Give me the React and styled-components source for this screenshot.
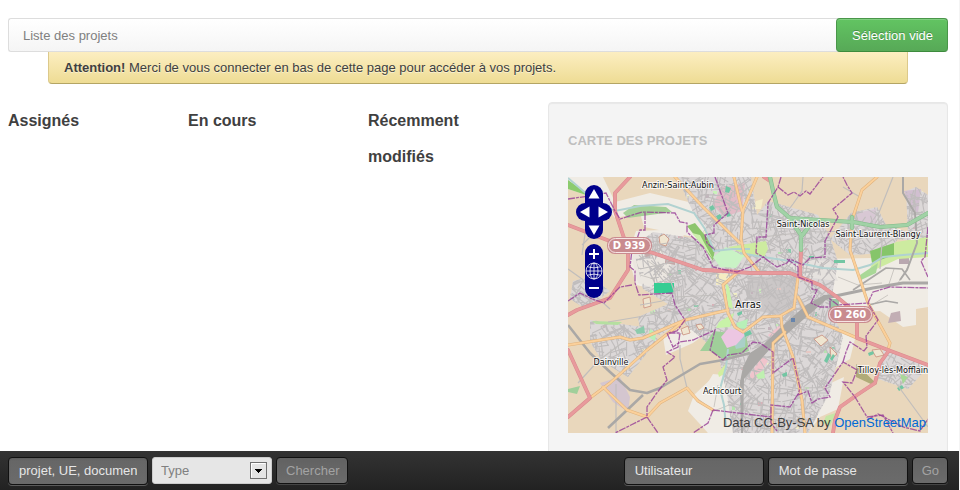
import React from "react";
import styled, { createGlobalStyle } from "styled-components";

const GlobalStyle = createGlobalStyle`
  *, *::before, *::after { box-sizing: border-box; }
  body {
    margin: 0;
    background: #fff;
    color: #404040;
    font: 13px/18px "Liberation Sans", Arial, sans-serif;
  }
  button, input, select { font: inherit; }
  h2, h3, p { margin: 0; }
`;

const Page = styled.div`
  display: flex;
  flex-direction: column;
  height: 100vh;
  border-right: 1px solid #f4f4f4;
`;

const Content = styled.main`
  flex: 1;
  min-height: 0;
  overflow-y: auto;
  scrollbar-width: none;
  padding: 18px 11px 0 8px;
`;

const Breadcrumb = styled.nav`
  display: flex;
  align-items: center;
  justify-content: space-between;
  height: 34px;
  padding-left: 14px;
  border: 1px solid #ddd;
  border-right: 0;
  border-radius: 3px;
  background: linear-gradient(#fff, #f5f5f5);
  color: #808080;
`;

const BreadcrumbLabel = styled.span`
  padding-top: 2px;
`;

const SelectionButton = styled.button`
  height: 34px;
  padding: 2px 14px 0 15px;
  border: 1px solid #4a964a;
  border-bottom-color: #3d8b3d;
  border-radius: 4px;
  background: linear-gradient(#62c462, #57a957);
  box-shadow: inset 0 1px 0 rgba(255, 255, 255, 0.2);
  color: #fff;
  text-shadow: 0 -1px 0 rgba(0, 0, 0, 0.25);
`;

const Alert = styled.p`
  margin: 0 40px 18px;
  padding: 7px 15px 6px;
  border: 1px solid #dcc98b;
  border-top: 0;
  border-bottom-color: #b4a564;
  border-radius: 0 0 4px 4px;
  background: linear-gradient(#fceec1, #eedc94);
  text-shadow: 0 1px 0 rgba(255, 255, 255, 0.5);
`;

const Columns = styled.div`
  display: grid;
  grid-template-columns: repeat(3, minmax(0, 8fr)) minmax(0, 20fr);
  gap: 20px;
`;

const ColumnTitle = styled.h2`
  padding-top: 1px;
  font-size: 16px;
  line-height: 36px;
`;

const Well = styled.section`
  padding: 20px 19px 56px;
  border: 1px solid #e7e7e7;
  border-radius: 4px;
  background: #f4f4f4;
  box-shadow: inset 0 1px 1px rgba(0, 0, 0, 0.05);
`;

const WellTitle = styled.h3`
  margin-bottom: 18px;
  color: #bfbfbf;
  font-size: 13px;
  line-height: 36px;
  text-transform: uppercase;
`;

const MapFrame = styled.div`
  position: relative;
  height: 256px;
  overflow: hidden;
`;

const MapDrawing = styled.svg`
  display: block;
  width: 100%;
  height: 100%;
`;

const MapControls = styled.div`
  position: absolute;
  top: 8px;
  left: 8px;
  display: grid;
  gap: 5px;
  justify-items: center;
`;

const PanPad = styled.div`
  display: grid;
  grid-template-columns: 18px 18px;
  grid-auto-rows: 18px;
  justify-items: center;
`;

const ZoomPad = styled.div`
  display: grid;
  grid-auto-rows: 18px;
`;

const radii = {
  up: "9px 9px 0 0",
  down: "0 0 9px 9px",
  left: "9px 0 0 9px",
  right: "0 9px 9px 0",
  middle: "0",
};

const MapButton = styled.button`
  width: 18px;
  height: 18px;
  padding: 0;
  border: 0;
  border-radius: ${(p) => radii[p.$shape]};
  background: #00008b;
  grid-column: ${(p) => (p.$wide ? "1 / -1" : "auto")};
`;

const MapIcon = styled.svg`
  display: block;
  width: 18px;
  height: 18px;
  fill: #fff;
`;

const Attribution = styled.div`
  position: absolute;
  right: 2px;
  bottom: 1px;
  font-size: 13px;
`;

const MapLink = styled.a`
  color: #0069d6;
  text-decoration: none;
`;

const Footer = styled.footer`
  display: flex;
  align-items: center;
  justify-content: space-between;
  height: 39px;
  padding: 0 11px 0 8px;
  background: linear-gradient(#333, #222);
`;

const Form = styled.form`
  display: flex;
  align-items: center;
  gap: 4px;
`;

const Field = styled.input`
  width: 140px;
  height: 28px;
  padding: 0 10px;
  border: 1px solid #111;
  border-radius: 4px;
  background: linear-gradient(#666, #6b6b6b);
  box-shadow: inset 0 1px 2px rgba(0, 0, 0, 0.1), 0 1px 0 rgba(255, 255, 255, 0.25);
  color: #e6e6e6;
  &::placeholder { color: #e6e6e6; opacity: 1; }
`;

const SelectBox = styled.div`
  position: relative;
  width: 120px;
`;

const Select = styled.select`
  display: block;
  width: 100%;
  height: 27px;
  padding: 0 8px;
  appearance: none;
  border: 1px solid #ccc;
  border-radius: 3px;
  background: #e6e6e6;
  color: #808080;
`;

const SelectArrow = styled.svg`
  position: absolute;
  top: 5px;
  right: 5px;
  width: 17px;
  height: 17px;
  pointer-events: none;
`;

const FooterButton = styled.button`
  height: 27px;
  padding: 0 8px 0 9px;
  border: 1px solid #111;
  border-radius: 4px;
  background: linear-gradient(#626262, #6b6b6b);
  box-shadow: 0 1px 0 rgba(255, 255, 255, 0.15);
  color: #a3a3a3;
`;

const URBAN = [
  "110,0 183,0 189,38 200,24 250,38 262,60 270,85 262,130 275,160 262,215 240,256 165,256 157,210 150,175 120,150 105,130 75,112 65,70 85,55 130,62 138,50 125,35 118,20",
  "283,36 309,30 318,48 340,55 338,14 348,10 360,18 360,66 330,62 318,76 282,78 262,62",
  "22,143 75,150 90,162 60,200 35,185 22,165",
  "70,140 105,125 118,142 92,158 72,152",
  "315,173 340,180 360,190 340,212 310,202",
  "5,104 22,100 42,114 18,132 2,122",
];

const CREAM = [
  "0,0 35,0 47,25 82,16 125,26 142,52 150,74 125,60 76,50 72,36 47,41 30,22 0,12",
  "68,54 118,52 102,96 96,114 68,108 60,78",
  "195,83 360,80 360,130 348,132 348,148 335,150 312,134 282,136 236,102",
  "124,232 145,197 176,200 174,256 140,256 138,246",
  "95,160 135,142 146,151 125,166 98,178",
  "249,155 270,150 287,162 282,182 262,194 240,206 250,180",
  "250,212 276,200 270,232 252,240 240,256 238,230",
];

const GREENS = [
  ["#8bcb6e", "0,3 27,22 32,36 18,18 0,12"],
  ["#a5cf97", "55,36 66,28 98,30 104,35 60,41"],
  ["#8dc56c", "119,49 127,46 140,62 147,72 145,84 136,70"],
  ["#cff1ae", "124,56 132,58 145,82 136,70"],
  ["#c9f3c5", "145,80 158,70 176,79 168,91 152,90"],
  ["#cdeba0", "160,70 198,64 200,72 196,80 174,76"],
  ["#cdeba0", "305,85 328,65 360,60 360,80 330,82 300,96"],
  ["#86c56a", "302,74 326,66 326,78 304,86"],
  ["#a9d897", "292,98 310,86 308,96 293,103"],
  ["#a0cf9a", "132,174 146,154 178,158 181,174 155,182 142,174"],
  ["#c8f3a8", "157,104 161,110 165,132 160,130"],
  ["#aad0c8", "166,166 178,156 177,170 168,172"],
  ["#b0ab78", "288,187 309,207 305,208 288,200"],
  ["#a0cf9a", "0,212 12,209 9,217 0,215"],
  ["#b5dfa0", "24,144 54,145 50,148 28,147"],
  ["#c8f3a8", "151,145 166,136 162,150 148,151"],
  ["#8ccbac", "67,153 76,149 77,156 69,157"],
  ["#9cc7a5", "261,122 271,122 271,131 262,131"],
  ["#bff0b0", "188,198 196,193 197,201 190,202"],
  ["#d3eea0", "150,196 160,184 156,197 151,200"],
  ["#c5e6a5", "258,239 268,236 262,249 255,246"],
  ["#a8d898", "332,197 340,200 335,207"],
  ["#b8f0b8", "168,146 180,142 178,152 170,151"],
  ["#b8f0b8", "82,152 88,156 87,164 80,160"],
];

const ACCENTS = [
  ["#e2bcc7", "153,10 177,6 174,34 156,40 145,28"],
  ["#f0c4cc", "184,194 196,178 200,184 188,202 180,202"],
  ["#f0c4cc", "200,158 212,148 212,154 204,162"],
  ["#d4c6cf", "32,206 52,200 62,220 60,235 45,225"],
  ["#f5ecc2", "148,96 163,97 157,107 148,108"],
  ["#d1bfd0", "336,14 353,12 350,36 342,32"],
  ["#d8c8d4", "288,36 308,32 308,46 286,46"],
  ["#f3ecc9", "188,24 195,22 193,32 184,32"],
  ["#c2aeb4", "323,136 332,134 333,144 320,146"],
  ["#c3a9a8", "97,79 107,81 107,88 97,86"],
  ["#b9a8b0", "331,80 341,80 341,87 331,87"],
  ["#c3a9a8", "76,75 83,76 82,81 77,80"],
];

const WATER = [
  "0,1 28,25 47,34 72,29 100,27 126,36 137,52 146,74 165,72 182,72",
  "172,76 195,80 222,84 255,91 285,93 302,88 315,80 335,78 360,76",
  "160,172 158,190 152,212 156,228 158,250",
];

const TRACKS = [
  "0,92 14,102 22,114 42,132", "14,68 22,60 40,62", "18,50 14,78", "72,128 94,124 110,112", "40,145 94,136 118,127",
  "112,168 112,182 119,211", "48,207 48,256", "10,206 30,184 62,160", "235,0 234,14 225,27 212,44",
  "325,0 310,38 314,66 312,92", "275,10 292,20 286,40", "325,202 344,228 360,250", "200,50 250,55 282,54",
  "70,70 100,66 130,72", "72,92 110,84 140,104", "100,96 108,120 150,118", "190,44 194,60 230,56",
];

const RAILS = [
  [2.6, "0,148 22,176 42,195 62,213 79,216 92,211 132,187 155,183 182,176"],
  [2.6, "40,251 75,218"],
  [2, "335,0 335,16 347,36 349,66 339,93 332,103"],
  [1.6, "285,113 318,91 334,92 342,103"],
  [3, "258,121 272,118 305,111 335,106 360,106"],
  [1.6, "300,128 318,124 330,126"],
];

const ORANGE = [
  "107,0 135,30 172,66", "189,0 175,33 173,62 176,76 192,96", "166,0 174,34", "170,95 155,108 160,136 167,150 175,155 195,140 212,139 226,131 230,100",
  "230,120 240,140 289,161", "213,139 214,150 225,180 234,223 237,256", "217,155 205,166 204,256",
  "160,133 117,143 75,161 62,163 52,160 0,168", "117,143 79,173 42,206 22,221", "35,210 59,233 79,240 92,226 119,211 130,224 145,233",
  "309,0 294,13 284,43 282,73 300,126 322,166 320,173",
];

const RED = [
  "0,48 39,63 85,76 135,93 158,94 182,96 222,96 232,100 252,108 269,120 281,130 289,145 289,161 320,173 360,188",
  "62,0 47,16 47,34 60,73 60,93 42,121 9,133 0,138", "0,173 22,221 0,240", "233,73 232,100",
  "320,175 312,186 307,206 289,218 272,230 267,243 265,256", "202,4 196,0",
];

const TRUNK = [
  "202,0 206,18 209,30 222,41 252,43 285,45 312,50 339,48 360,36",
  "233,73 233,58 222,42", "233,60 245,44", "284,51 284,40",
];

const BORDERS = [
  "0,22 28,18 38,16 47,34 52,42 74,35 107,36 112,45 119,46 119,55 135,70 145,90 158,93 169,95 182,90 195,80 209,90 219,86 222,82 235,88 242,81 257,80 257,64 270,40 265,32 284,16 279,8 275,0",
  "147,0 160,36 146,48 146,56 137,58 139,66 147,73", "213,0 210,10 200,26 198,60 189,60 188,76 197,81",
  "210,10 220,18 226,15 232,19 238,14 242,17 255,0", "219,82 230,90 230,100 244,105 244,112 249,113 243,126 252,130 262,130 262,122 270,128 300,126 305,115 322,110 360,111",
  "360,50 357,80 353,84 360,100", "77,36 77,53 72,53 69,62 65,64 62,90 67,94 67,106 71,118 104,116 107,128 117,143 109,154 100,156 112,156 110,170 99,175 107,180 95,190 99,203 88,217 79,230 79,240 47,256",
  "79,240 90,256", "64,108 52,110 36,126 24,122", "0,124 12,116 24,122", "99,156 105,170 112,165 125,163 147,153 142,173 155,183 160,178 174,176 185,165 192,166 205,175 205,196 225,181 232,211 230,218 240,214 244,226 250,222 262,220 257,211 275,185 289,193 284,206 275,205 287,220 299,240 315,238 325,256",
  "230,217 222,230 203,228 203,246 209,254", "275,185 278,175 282,165 296,174 299,170 298,159 310,143 300,126", "145,233 140,246 125,256", "145,233 203,240", "299,243 310,237 335,250 352,254 360,242",
];

const LABELS = [
  [110, 11, "Anzin-Saint-Aubin", 9],
  [235, 50, "Saint-Nicolas", 9],
  [310, 60, "Saint-Laurent-Blangy", 9],
  [180, 131, "Arras", 11],
  [43, 188, "Dainville", 9],
  [154, 217, "Achicourt", 9],
  [325, 196, "Tilloy-lès-Mofflain", 9],
];

/* Residential streets: small jittered grids, deterministic from one seed. */
function buildStreets() {
  let seed = 41;
  const random = () => {
    seed = (seed * 16807) % 2147483647;
    return seed / 2147483647;
  };
  let path = "";
  for (let y = 0; y < 260; y += 14) {
    for (let x = 0; x < 364; x += 15) {
      const angle = random() * Math.PI;
      for (let n = 0; n < 8; n += 1) {
        const a = angle + (n % 2 ? Math.PI / 2 : 0) + (random() - 0.5) / 2;
        const cx = x + random() * 15;
        const cy = y + random() * 14;
        const half = 3 + random() * 7;
        const dx = Math.cos(a) * half;
        const dy = Math.sin(a) * half;
        path += `M${(cx - dx).toFixed(1)} ${(cy - dy).toFixed(1)}L${(cx + dx).toFixed(1)} ${(cy + dy).toFixed(1)}`;
      }
    }
  }
  return path;
}

function buildBlocks() {
  const colors = ["#c8f3b8", "#8ccbac", "#f2efc6", "#e7c8c4", "#d9b1b8", "#c2b4bb", "#b5e3b0"];
  return Array.from({ length: 110 }, (_, i) => ({
    x: (i * 73 + 19) % 356,
    y: (i * 47 + (i % 7) * 11) % 252,
    w: 2 + (i % 4),
    h: 2 + (i % 3),
    fill: colors[i % colors.length],
  }));
}

const STREETS = buildStreets();
const BLOCKS = buildBlocks();

function Road({ lines, casing, color, width }) {
  return (
    <g fill="none" strokeLinejoin="round" strokeLinecap="round">
      {lines.map((points) => <polyline key={points} points={points} stroke={casing} strokeWidth={width + 1} />)}
      {lines.map((points) => <polyline key={points} points={points} stroke={color} strokeWidth={width} />)}
    </g>
  );
}

function Shield({ x, y, text }) {
  return (
    <g>
      <rect x={x} y={y} width="45" height="17" rx="8" fill="#c98b8f" />
      <rect x={x + 1.5} y={y + 1.5} width="42" height="14" rx="7" fill="#c98b8f" stroke="#f6e4e4" />
      <text x={x + 22} y={y + 12} textAnchor="middle" fill="#fff" fontFamily="DejaVu Sans, sans-serif" fontWeight="700" fontSize="10">{text}</text>
    </g>
  );
}

function CityMap() {
  return (
    <MapDrawing viewBox="0 0 360 256" preserveAspectRatio="xMidYMid slice" role="img" aria-label="Carte d'Arras">
      <defs>
        <clipPath id="urban">
          {URBAN.map((points) => <polygon key={points} points={points} />)}
        </clipPath>
      </defs>
      <rect width="360" height="256" fill="#e9d7bc" />
      {CREAM.map((points) => <polygon key={points} points={points} fill="#f0ece5" />)}
      {URBAN.map((points) => <polygon key={points} points={points} fill="#dcd8d8" />)}
      <polygon points="68,70 92,72 104,86 94,114 70,106 64,82" fill="#ebe6e0" />
      <polygon points="120,234 126,218 145,200 158,208 164,256 140,256" fill="#f0ece5" />
      <polygon points="205,80 262,84 270,104 236,100" fill="#e6e2de" />
      <polygon points="180,100 228,99 227,130 212,138 190,134 178,118" fill="#cbc7c7" />
      {ACCENTS.map(([fill, points]) => <polygon key={points} points={points} fill={fill} />)}
      <g clipPath="url(#urban)">
        {BLOCKS.map((b, i) => <rect key={i} x={b.x} y={b.y} width={b.w} height={b.h} fill={b.fill} />)}
        <path d={STREETS} fill="none" stroke="#c0bdbd" strokeWidth="1.1" />
      </g>
      <g fill="none" stroke="#c2beb9" strokeWidth="0.8">
        <path d="M75 60l8 14 16 6M80 84l20 14M72 98l14 4 8-14M88 62l10 22M130 222l16 12 20-8M150 208l-4 22M270 100l20 8 24-2M320 118l-16 10M326 92l-6 18M340 90l-10 16M256 166l16 10M268 156l-10 30M110 158l18-8" />
        <path d="M91 60l5-3 5 5-3 7-6-2zM246 162l8-4 6 5-7 6zM262 170l7 7-6 5zM75 122l7-2 1 9-7 2zM304 173l8-1 4 6-8 2zM113 152l7-3 2 7-7 2zM128 148l5-1 3 4-5 2z" fill="#efe5d0" stroke="#c98e7e" />
      </g>
      {GREENS.map(([fill, points]) => <polygon key={points} points={points} fill={fill} />)}
      <polygon points="153,160 160,152 172,153 177,158 168,168 159,171" fill="#ecc6e2" />
      <rect x="86" y="106" width="20" height="10" fill="#35cd93" />
      <g fill="#72c6a3">
        <path d="M141 30l4-2 2 4-4 2zM148 39l4-2 2 4-4 2zM158 37l3-2 2 4-4 1zM158 9l5 2-2 5-4-1zM176 156l6-3 2 4-7 3zM169 136l5-2v3l-4 2zM256 184l4-8 3 2-4 8zM262 182l3-5 2 2-3 5zM329 211l5-3 2 3-5 3zM300 176l5-2 1 3-5 2zM214 197l5-2v4l-4 1z" />
        <path d="M266 83h11v3h-11zM241 79h5v2h-5z" />
      </g>
      <g fill="none" stroke="#b1d2d1" strokeWidth="2">
        {WATER.map((points) => <polyline key={points} points={points} />)}
      </g>
      <g fill="none" stroke="#c1bebc" strokeWidth="1.2">
        {TRACKS.map((points) => <polyline key={points} points={points} />)}
      </g>
      <g fill="none" stroke="#aaa8a6" strokeLinejoin="round">
        {RAILS.map(([width, points]) => <polyline key={points} points={points} strokeWidth={width} />)}
      </g>
      <polygon points="173,256 172,205 175,190 182,176 196,167 212,151 238,128 256,118 270,117 258,123 236,142 202,172 186,190 176,202 175,256" fill="#aaa8a6" />
      <Road lines={ORANGE} casing="#dfb27d" color="#fbd09a" width={2} />
      <Road lines={RED} casing="#d98a8e" color="#e89a9c" width={2.8} />
      <Road lines={TRUNK} casing="#80b988" color="#a1d2a6" width={3.2} />
      <g fill="none" stroke="#963c96" strokeOpacity="0.8" strokeWidth="1.3" strokeDasharray="7 1 3 1">
        {BORDERS.map((points) => <polyline key={points} points={points} />)}
      </g>
      <rect x="223" y="141" width="4" height="4" fill="#6684ac" />
      <Shield x={39} y={60} text="D 939" />
      <Shield x={260} y={129} text="D 260" />
      <g fill="#111" stroke="#fff" strokeWidth="2" strokeOpacity="0.75" strokeLinejoin="round" paintOrder="stroke" textAnchor="middle" fontFamily="DejaVu Sans Condensed, DejaVu Sans, sans-serif">
        {LABELS.map(([x, y, text, size]) => <text key={text} x={x} y={y} fontSize={size}>{text}</text>)}
      </g>
    </MapDrawing>
  );
}

function ControlButton({ label, shape, wide, children }) {
  return (
    <MapButton type="button" aria-label={label} $shape={shape} $wide={wide}>
      <MapIcon viewBox="0 0 18 18" aria-hidden="true">{children}</MapIcon>
    </MapButton>
  );
}

export default function App() {
  return (
    <>
      <GlobalStyle />
      <Page>
        <Content>
          <Breadcrumb>
            <BreadcrumbLabel>Liste des projets</BreadcrumbLabel>
            <SelectionButton type="button">Sélection vide</SelectionButton>
          </Breadcrumb>
          <Alert role="alert">
            <strong>Attention!</strong> Merci de vous connecter en bas de cette page pour accéder à vos projets.
          </Alert>
          <Columns>
            <ColumnTitle>Assignés</ColumnTitle>
            <ColumnTitle>En cours</ColumnTitle>
            <ColumnTitle>Récemment modifiés</ColumnTitle>
            <Well>
              <WellTitle>Carte des projets</WellTitle>
              <MapFrame>
                <CityMap />
                <MapControls>
                  <PanPad>
                    <ControlButton label="Haut" shape="up" wide><path d="M9 4L14.500 13.500h-11z" /></ControlButton>
                    <ControlButton label="Gauche" shape="left"><path d="M4 9L13.500 3.500v11z" /></ControlButton>
                    <ControlButton label="Droite" shape="right"><path d="M14 9L4.500 3.500v11z" /></ControlButton>
                    <ControlButton label="Bas" shape="down" wide><path d="M9 14L14.500 4.500h-11z" /></ControlButton>
                  </PanPad>
                  <ZoomPad>
                    <ControlButton label="Zoom avant" shape="up"><path d="M8 5h2v4h4v2h-4v4H8v-4H4V9h4z" /></ControlButton>
                    <ControlButton label="Vue globale" shape="middle">
                      <g fill="none" stroke="#fff" strokeWidth="0.8">
                        <circle cx="9" cy="9" r="8" />
                        <ellipse cx="9" cy="9" rx="4" ry="8" />
                        <path d="M9 1v16M1 9h16M2.500 4.800q6.500 2.200 13 0M2.500 13.200q6.500-2.200 13 0" />
                      </g>
                    </ControlButton>
                    <ControlButton label="Zoom arrière" shape="down"><path d="M4 7h10v2H4z" /></ControlButton>
                  </ZoomPad>
                </MapControls>
                <Attribution>
                  Data CC-By-SA by <MapLink href="#osm">OpenStreetMap</MapLink>
                </Attribution>
              </MapFrame>
            </Well>
          </Columns>
        </Content>
        <Footer>
          <Form>
            <Field type="text" aria-label="Recherche" placeholder="projet, UE, document" />
            <SelectBox>
              <Select aria-label="Type" defaultValue="Type">
                <option>Type</option>
              </Select>
              <SelectArrow viewBox="0 0 17 17" aria-hidden="true">
                <rect x="0.5" y="0.5" width="16" height="16" fill="#e4e4e4" stroke="#707070" />
                <path d="M1.500 15.500v-14h14" fill="none" stroke="#fff" />
                <path d="M5 7h7v1h-1v1h-1v1H9v1H8v-1H7V9H6V8H5z" fill="#000" />
              </SelectArrow>
            </SelectBox>
            <FooterButton type="button">Chercher</FooterButton>
          </Form>
          <Form>
            <Field type="text" aria-label="Utilisateur" placeholder="Utilisateur" />
            <Field type="password" aria-label="Mot de passe" placeholder="Mot de passe" />
            <FooterButton type="button">Go</FooterButton>
          </Form>
        </Footer>
      </Page>
    </>
  );
}
